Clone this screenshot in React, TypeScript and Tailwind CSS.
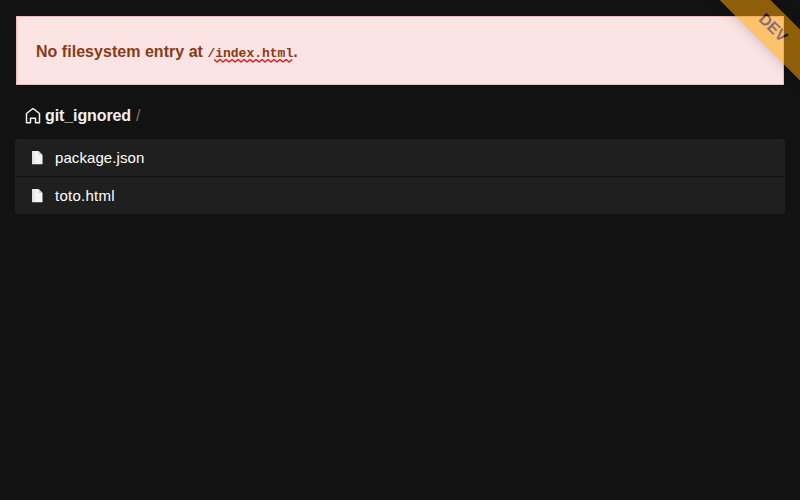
const files = [
  { name: "package.json", tracking: "tracking-[0.08px]" },
  { name: "toto.html", tracking: "tracking-[0.25px]" },
];

function HomeIcon() {
  return (
    <svg className="h-4 w-4 shrink-0" viewBox="0 0 16 16" fill="none" stroke="#f1f1f1" strokeWidth="1.5" strokeLinejoin="round">
      <path d="M1.5 5.5 8 .5l6.5 5v9.3h-4v-4.6h-5v4.6h-4z" />
    </svg>
  );
}

function FileIcon() {
  return (
    <svg className="h-[14px] w-3 shrink-0" viewBox="0 0 12 14">
      <defs>
        <linearGradient id="paper" x1="0" y1="0" x2="1" y2="0">
          <stop offset="0" stopColor="#dedede" />
          <stop offset="0.4" stopColor="#f4f4f4" />
        </linearGradient>
      </defs>
      <path d="M1 0h6.5l4 4v9.2H1z" fill="url(#paper)" />
      <path d="M7.5 0l4 4h-4z" fill="#d4d4d4" />
    </svg>
  );
}

export default function App() {
  return (
    <div className="relative h-[500px] w-[800px] overflow-hidden bg-[#121212] px-[15px] pt-4 font-['Liberation_Sans',Arial,sans-serif] text-white">
      <div className="mx-px flex h-[69px] items-center border border-[#ffb3b3] bg-[#fce4e4] px-[19px] pt-1 text-base font-bold text-[#8a3a12]">
        <p className="flex items-baseline whitespace-pre leading-6">
          <span className="w-[171.4px] tracking-[0.03px]">No filesystem entry at </span>
          <span className="relative font-['Liberation_Mono','Courier_New',monospace] text-[13px]">
            /index.html
            <svg className="absolute left-[7px] top-[16px] h-[6px] w-[79px]" viewBox="0 0 79 6" fill="none" stroke="#f00c0c" strokeWidth="1.3" strokeLinejoin="round">
              <path d="M0 1.5l3 2.5l3-2.5l3 2.5l3-2.5l3 2.5l3-2.5l3 2.5l3-2.5l3 2.5l3-2.5l3 2.5l3-2.5l3 2.5l3-2.5l3 2.5l3-2.5l3 2.5l3-2.5l3 2.5l3-2.5l3 2.5l3-2.5l3 2.5l3-2.5l3 2.5l3-2.5" />
            </svg>
          </span>
          <span>.</span>
        </p>
      </div>
      <nav className="flex h-[54px] items-center pl-[10px] pt-[7px] text-base font-bold">
        <HomeIcon />
        <span className="ml-1 tracking-[-0.1px] text-[#f1f1f1]">git_ignored</span>
        <span className="ml-[5px] font-normal text-[#777]">/</span>
      </nav>
      <ul className="flex flex-col gap-px overflow-hidden rounded-[3px] text-[15px]">
        {files.map(({ name, tracking }) => (
          <li key={name} className="flex h-[37px] items-center gap-3 bg-[#1f1f1f] pl-4">
            <FileIcon />
            <span className={`pt-0.5 ${tracking}`}>{name}</span>
          </li>
        ))}
      </ul>
      <div className="absolute left-[672.5px] top-[9.5px] flex h-9 w-[200px] rotate-45 items-center justify-center bg-[#ffa500] text-base font-bold text-[#200018] opacity-[0.52] shadow-[0_0_12px_rgba(0,0,0,0.4)]">
        DEV
      </div>
    </div>
  );
}
